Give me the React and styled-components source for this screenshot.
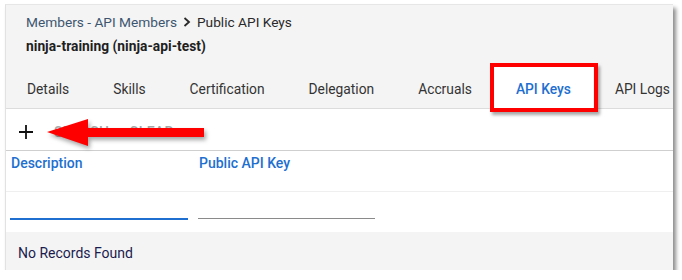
import React from "react";
import styled, { createGlobalStyle } from "styled-components";

const Global = createGlobalStyle`
  body {
    margin: 0;
    background: #ffffff;
    font-family: Roboto, "Liberation Sans", sans-serif;
  }
`;

const Page = styled.div`
  padding: 4px 0 0 5px;
`;

const Panel = styled.div`
  position: relative;
  width: 668px;
  height: 266px;
  background: #ffffff;
  border-left: 1px solid #e2e2e2;
  border-top: 1px solid #e6e6e6;
  box-sizing: border-box;
  box-shadow: 3px 4px 4px rgba(0, 0, 0, 0.45);
  display: flex;
  flex-direction: column;
`;

const Header = styled.div`
  background: #f4f4f4;
  padding: 7px 0 0 0;
  border-bottom: 1px solid #dcdcdc;
`;

const Crumbs = styled.div`
  padding-left: 20px;
  height: 20px;
  display: flex;
  align-items: center;
  gap: 6px;
  font-size: 13.7px;
  color: #3d5670;
`;

const Current = styled.span`
  color: #2a2a2a;
`;

const Chevron = styled.svg`
  width: 8px;
  height: 10px;
`;

const Title = styled.div`
  padding-left: 20px;
  margin-top: 5px;
  height: 18px;
  line-height: 18px;
  font-size: 13.8px;
  font-weight: 700;
  color: #1f1f1f;
`;

const Tabs = styled.div`
  display: flex;
  margin-top: 12px;
  height: 41px;
`;

const Tab = styled.div`
  position: relative;
  padding: 3px 22px 0 ${(p) => (p.$first ? "21px" : "22px")};
  display: flex;
  align-items: center;
  font-size: 13.8px;
  color: ${(p) => (p.$active ? "#1e6fd0" : "#333333")};
  font-weight: ${(p) => (p.$active ? 500 : 400)};
  background: ${(p) => (p.$active ? "#ffffff" : "transparent")};
  white-space: nowrap;
`;

const Highlight = styled.div`
  position: absolute;
  left: -4px;
  right: -5px;
  top: -4px;
  bottom: -4px;
  border: 4px solid #ff0000;
  box-shadow: 2px 3px 3px rgba(0, 0, 0, 0.35);
  pointer-events: none;
`;

const Toolbar = styled.div`
  position: relative;
  height: 41px;
  display: flex;
  align-items: center;
  padding-left: 12px;
  gap: 20px;
  border-bottom: 1px solid #cfcfcf;
`;

const PlusButton = styled.svg`
  width: 16px;
  height: 16px;
  margin-top: 4px;
`;

const GhostButton = styled.span`
  font-size: 14px;
  font-weight: 500;
  letter-spacing: 0.3px;
  color: #a8a8a8;
  margin-top: 4px;
`;

const Arrow = styled.svg`
  position: absolute;
  left: 41px;
  top: 10px;
  width: 157px;
  height: 28px;
  overflow: visible;
  filter: drop-shadow(2px 3px 2px rgba(0, 0, 0, 0.35));
`;

const HeadRow = styled.div`
  height: 40px;
  display: grid;
  grid-template-columns: 188px 180px;
  padding-left: 5px;
  border-bottom: 1px solid #efefef;
`;

const HeadCell = styled.div`
  padding-top: 4px;
  font-size: 14px;
  font-weight: 500;
  color: #1e6fd0;
`;

const FilterRow = styled.div`
  height: 40px;
  display: grid;
  grid-template-columns: 178px 177px;
  column-gap: 10px;
  padding-left: 4px;
  align-items: start;
`;

const FilterInput = styled.div`
  margin-top: 26px;
  height: 0;
  border-bottom: ${(p) => (p.$focused ? "2px solid #1e6fd0" : "1px solid #8a8a8a")};
`;

const Footer = styled.div`
  flex: 1;
  background: #f4f4f4;
  display: flex;
  align-items: center;
  padding: 4px 0 0 12px;
  font-size: 14px;
  color: #1b1b4f;
`;

const tabs = ["Details", "Skills", "Certification", "Delegation", "Accruals", "API Keys", "API Logs"];

export default function App() {
  return (
    <Page>
      <Global />
      <Panel>
        <Header>
          <Crumbs>
            <span>Members - API Members</span>
            <Chevron viewBox="0 0 8 10">
              <path d="M1.5 1 L6 5 L1.5 9" fill="none" stroke="#2a2a2a" strokeWidth="1.8" />
            </Chevron>
            <Current>Public API Keys</Current>
          </Crumbs>
          <Title>ninja-training (ninja-api-test)</Title>
          <Tabs>
            {tabs.map((t, i) => (
              <Tab key={t} $first={i === 0} $active={t === "API Keys"}>
                {t}
                {t === "API Keys" && <Highlight />}
              </Tab>
            ))}
          </Tabs>
        </Header>
        <Toolbar>
          <PlusButton viewBox="0 0 16 16">
            <path d="M8 1 V15 M1 8 H15" stroke="#111" strokeWidth="1.8" />
          </PlusButton>
          <GhostButton>SEARCH</GhostButton>
          <GhostButton>CLEAR</GhostButton>
          <Arrow viewBox="0 0 157 28">
            <polygon points="0,13 41,0 41,9 157,9 157,18 41,18 41,27" fill="#ff0000" />
          </Arrow>
        </Toolbar>
        <HeadRow>
          <HeadCell>Description</HeadCell>
          <HeadCell>Public API Key</HeadCell>
        </HeadRow>
        <FilterRow>
          <FilterInput $focused />
          <FilterInput />
        </FilterRow>
        <Footer>No Records Found</Footer>
      </Panel>
    </Page>
  );
}
